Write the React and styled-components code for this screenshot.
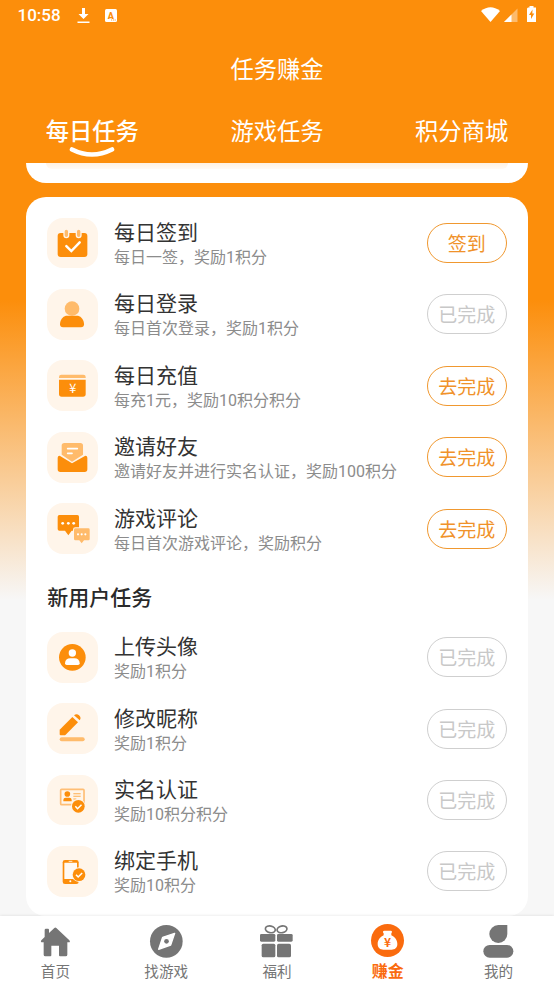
import styled, { createGlobalStyle } from "styled-components";

const GlobalStyle = createGlobalStyle`
  * {
    box-sizing: border-box;
  }
  body {
    margin: 0;
    font-family: Roboto, "Noto Sans CJK SC", sans-serif;
  }
`;

const ORANGE = "#fc8e0b";
const LIGHT = "#ffbb6b";
const CREAM = "#fff5ea";
const GRAY = "#757575";

const Page = styled.div`
  width: 554px;
  height: 984px;
  display: flex;
  flex-direction: column;
  overflow: hidden;
  background: linear-gradient(180deg, ${ORANGE} 0, ${ORANGE} 300px, #f7f7f7 600px);
`;

const StatusBar = styled.div`
  display: flex;
  align-items: center;
  height: 31px;
  padding: 0 17px 0 17.5px;
  color: #fff;
`;

const Clock = styled.span`
  font-size: 17px;
  font-weight: 500;
  line-height: 31px;
  width: 59.5px;
`;

const StatusIcons = styled.div`
  display: flex;
  align-items: center;
  gap: ${(p) => p.$gap || 0}px;
  margin-left: ${(p) => (p.$right ? "auto" : "0")};
  padding-bottom: ${(p) => (p.$right ? 2 : 1)}px;
  svg {
    display: block;
  }
`;

const TitleBar = styled.h1`
  margin: 0;
  height: 76px;
  line-height: 78px;
  text-align: center;
  font-size: 23.3px;
  font-weight: 400;
  color: #fff;
`;

const Tabs = styled.div`
  display: flex;
  height: 56px;
`;

const Tab = styled.div`
  flex: 1;
  display: flex;
  flex-direction: column;
  align-items: center;
  font-size: 23.3px;
  line-height: 38px;
  padding-top: 6px;
  color: #fff;
  font-weight: ${(p) => (p.$active ? 500 : 400)};
  svg {
    margin-top: -6px;
  }
`;

const Content = styled.div`
  flex: 1;
  min-height: 0;
  overflow: hidden;
  padding: 0 26.5px 0 26.3px;
`;

const PrevCard = styled.div`
  height: 20px;
  padding: 0 20px;
  border-radius: 0 0 20px 20px;
  background: #fff;
  margin-bottom: 14px;
`;

const PrevCardInner = styled.div`
  height: 6px;
  border-radius: 0 0 20px 20px;
  background: linear-gradient(180deg, #fff1e2, #fffaf5);
`;

const Card = styled.div`
  height: 719px;
  padding: 10.3px 20.7px 0 21px;
  border-radius: 20px;
  background: #fff;
`;

const Row = styled.div`
  display: flex;
  align-items: center;
  height: 71.4px;
`;

const Tile = styled.div`
  width: 50.7px;
  height: 50.7px;
  border-radius: 16px;
  background: ${CREAM};
  svg {
    display: block;
    width: 100%;
    height: 100%;
  }
`;

const Texts = styled.div`
  flex: 1;
  padding: 3px 0 0 16px;
  white-space: nowrap;
`;

const RowTitle = styled.div`
  font-size: 21px;
  line-height: 26px;
  color: #333;
`;

const RowSub = styled.div`
  font-size: 16px;
  line-height: 23px;
  color: #8c8c8c;
`;

const Action = styled.button`
  width: 80px;
  height: 40px;
  padding: 3px 0 0;
  border-radius: 20px;
  border: 1.4px solid ${(p) => (p.$done ? "#cfcfcf" : "#f0982f")};
  background: #fff;
  font-family: inherit;
  font-size: 19px;
  line-height: 35px;
  color: ${(p) => (p.$done ? "#c8c8c8" : "#f0922a")};
`;

const SectionTitle = styled.h2`
  margin: 0;
  height: 57.3px;
  padding-top: 9.5px;
  line-height: 49px;
  font-size: 21px;
  font-weight: 500;
  color: #2a2a2a;
`;

const Nav = styled.nav`
  display: flex;
  height: 68px;
  background: #fff;
  box-shadow: 0 0 3px rgba(0, 0, 0, 0.12);
`;

const NavItem = styled.div`
  flex: 1;
  display: flex;
  flex-direction: column;
  align-items: center;
  padding-top: ${(p) => (p.$active ? 7.5 : 8.7)}px;
  font-size: ${(p) => (p.$active ? 16 : 14.6)}px;
  font-weight: ${(p) => (p.$active ? 700 : 400)};
  line-height: ${(p) => (p.$active ? 29 : 28)}px;
  color: ${(p) => (p.$active ? "#fa6b0e" : "#757575")};
  svg {
    display: block;
    width: 33px;
    height: 33px;
    overflow: visible;
  }
`;

const TileSvg = ({ children }) => <svg viewBox="0 0 152 152">{children}</svg>;

const Badge = ({ x, y }) => (
  <>
    <circle cx={x} cy={y} r="22" fill={CREAM} />
    <circle cx={x} cy={y} r="19" fill={ORANGE} />
    <path d={`M${x - 9} ${y}l6.5 7 12-12`} fill="none" stroke="#fff" strokeWidth="4.5" />
  </>
);

const CalendarIcon = () => (
  <TileSvg>
    <rect x="32" y="45" width="89" height="72" rx="9" fill={ORANGE} />
    <rect x="51" y="33" width="14" height="26" rx="7" fill={LIGHT} stroke={CREAM} strokeWidth="4" />
    <rect x="88" y="33" width="14" height="26" rx="7" fill={LIGHT} stroke={CREAM} strokeWidth="4" />
    <path d="M58 84l15 15 25-26" fill="none" stroke="#fff" strokeWidth="7.5" strokeLinecap="round" />
  </TileSvg>
);

const UserIcon = () => (
  <TileSvg>
    <path d="M57 80h36c10 2 18 13 18 26 0 6-3 9-9 9H48c-6 0-9-3-9-9 0-13 8-24 18-26z" fill={ORANGE} />
    <circle cx="75" cy="59" r="22" fill={LIGHT} />
  </TileSvg>
);

const WalletIcon = () => (
  <TileSvg>
    <path d="M36 54v-3q0-7 7-7h66q7 0 7 7v3z" fill={LIGHT} />
    <path d="M36 59h80v43q0 8-8 8H44q-8 0-8-8z" fill={ORANGE} />
    <text x="77.5" y="98" textAnchor="middle" fontSize="38" fontFamily="Noto Sans CJK SC" fill="#fff">¥</text>
  </TileSvg>
);

const LetterIcon = () => (
  <TileSvg>
    <path d="M44 41q0-8 8-8h48q8 0 8 8v27L75 89 44 68z" fill={LIGHT} />
    <path d="M62 50h29M62 64h13" stroke="#fff" strokeWidth="5" strokeLinecap="round" />
    <path d="M32 77q0-6 6-6l37 23 40-23q6 0 6 6v35q0 8-8 8H40q-8 0-8-8z" fill={ORANGE} />
  </TileSvg>
);

const ChatIcon = () => (
  <TileSvg>
    <path d="M37 36h54q5 0 5 5v37q0 5-5 5H74L64 97 54 83H37q-5 0-5-5V41q0-5 5-5z" fill={ORANGE} />
    <path d="M85 76h39q4 0 4 4v28q0 4-4 4h-13l-7 9-7-9H85q-4 0-4-4V80q0-4 4-4z" fill={LIGHT} stroke={CREAM} strokeWidth="6" paintOrder="stroke" />
    <g fill="#fff">
      <circle cx="47" cy="61" r="4.2" />
      <circle cx="64" cy="61" r="4.2" />
      <circle cx="80" cy="61" r="4.2" />
      <circle cx="93" cy="94" r="3.2" />
      <circle cx="104" cy="94" r="3.2" />
      <circle cx="115" cy="94" r="3.2" />
    </g>
  </TileSvg>
);

const AvatarIcon = () => (
  <TileSvg>
    <circle cx="76" cy="76" r="40" fill={ORANGE} />
    <circle cx="76" cy="63" r="11" fill="#fff" />
    <path d="M54 94q1-15 16-15h12q15 0 16 15q0 5-5 5H59q-5 0-5-5z" fill="#fff" />
  </TileSvg>
);

const PencilIcon = () => (
  <TileSvg>
    <path d="M41 97q-3 0-3-3V80L76 42l17 16-37 37q-2 2-5 2z" fill={ORANGE} />
    <path d="M81 37q8-7 15 0 8 7 2 15z" fill={ORANGE} />
    <rect x="38" y="103" width="75" height="12" rx="6" fill={LIGHT} />
  </TileSvg>
);

const IdCardIcon = () => (
  <TileSvg>
    <rect x="41" y="43" width="70" height="46" rx="3" fill="none" stroke="#ffbe75" strokeWidth="5" />
    <circle cx="61" cy="57" r="8.5" fill={ORANGE} />
    <path d="M49 79v-4q0-7 7-7h11q7 0 7 7v4z" fill={ORANGE} />
    <path d="M79 56h22M79 64h22M79 72h9" stroke="#ffae50" strokeWidth="3" />
    <Badge x={94} y={94} />
  </TileSvg>
);

const PhoneIcon = () => (
  <TileSvg>
    <rect x="47" y="42" width="48" height="72" rx="7" fill={ORANGE} />
    <rect x="52" y="50" width="38" height="49" rx="1" fill="#fffaf4" />
    <circle cx="70" cy="106" r="3" fill="#fff" />
    <path d="M65 46h11" stroke="#fff" strokeWidth="2.5" />
    <Badge x={96} y={86} />
  </TileSvg>
);

const HomeIcon = () => (
  <svg viewBox="0 0 99 99" fill={GRAY}>
    <path d="M46 9q3-3 6 0L91 46q3 3 1 6h-7v37q0 5-5 5H63q-3 0-3-3V62H37v29q0 3-3 3H19q-5 0-5-5V52H7q-3-3 0-6l10-10V15q0-4 4-4h6q3 0 3 4v9z" />
  </svg>
);

const CompassIcon = () => (
  <svg viewBox="0 0 99 99">
    <circle cx="49" cy="49" r="49" fill={GRAY} />
    <path d="M74 25L62 60 26 73 38 37z" fill="#fff" stroke="#fff" strokeWidth="4" strokeLinejoin="round" />
    <circle cx="49.5" cy="49" r="7" fill={GRAY} />
  </svg>
);

const GiftIcon = () => (
  <svg viewBox="0 0 99 99" fill={GRAY}>
    <g fill="none" stroke={GRAY} strokeWidth="5">
      <ellipse cx="31" cy="13" rx="15" ry="10" transform="rotate(12 31 13)" />
      <ellipse cx="66" cy="13" rx="15" ry="10" transform="rotate(-12 66 13)" />
    </g>
    <rect x="0" y="27" width="46" height="23" rx="4" />
    <rect x="51" y="27" width="47" height="23" rx="4" />
    <rect x="5" y="56" width="41" height="41" rx="5" />
    <rect x="51" y="56" width="42" height="41" rx="5" />
  </svg>
);

const MoneyIcon = () => (
  <svg viewBox="0 0 99 99">
    <circle cx="49.5" cy="49.5" r="49.5" fill="#fa6b0e" />
    <path d="M40 20h19q4 0 4 4-1 3-2 4v6c11 5 18 15 18 26 0 12-8 17-17 17H37c-9 0-17-5-17-17 0-11 7-21 18-26v-6q-2-1-2-4 0-4 4-4z" fill="#fff" />
    <text x="49.5" y="69" textAnchor="middle" fontSize="36" fontWeight="700" fontFamily="Noto Sans CJK SC" fill="#fa6b0e">¥</text>
  </svg>
);

const MeIcon = () => (
  <svg viewBox="0 0 99 99" fill={GRAY}>
    <path d="M49 0h27v27a27 27 0 1 1-27-27z" />
    <rect x="4" y="60" width="90" height="38" rx="19" />
  </svg>
);

const dailyTasks = [
  { icon: CalendarIcon, title: "每日签到", sub: "每日一签，奖励1积分", action: "签到" },
  { icon: UserIcon, title: "每日登录", sub: "每日首次登录，奖励1积分", action: "已完成", done: true },
  { icon: WalletIcon, title: "每日充值", sub: "每充1元，奖励10积分积分", action: "去完成" },
  { icon: LetterIcon, title: "邀请好友", sub: "邀请好友并进行实名认证，奖励100积分", action: "去完成" },
  { icon: ChatIcon, title: "游戏评论", sub: "每日首次游戏评论，奖励积分", action: "去完成" },
];

const newUserTasks = [
  { icon: AvatarIcon, title: "上传头像", sub: "奖励1积分", action: "已完成", done: true },
  { icon: PencilIcon, title: "修改昵称", sub: "奖励1积分", action: "已完成", done: true },
  { icon: IdCardIcon, title: "实名认证", sub: "奖励10积分积分", action: "已完成", done: true },
  { icon: PhoneIcon, title: "绑定手机", sub: "奖励10积分", action: "已完成", done: true },
];

const navItems = [
  { icon: HomeIcon, label: "首页" },
  { icon: CompassIcon, label: "找游戏" },
  { icon: GiftIcon, label: "福利" },
  { icon: MoneyIcon, label: "赚金", active: true },
  { icon: MeIcon, label: "我的" },
];

const TaskRow = ({ task }) => {
  const Icon = task.icon;
  return (
    <Row>
      <Tile>
        <Icon />
      </Tile>
      <Texts>
        <RowTitle>{task.title}</RowTitle>
        <RowSub>{task.sub}</RowSub>
      </Texts>
      <Action $done={task.done}>{task.action}</Action>
    </Row>
  );
};

export default function App() {
  return (
    <Page>
      <GlobalStyle />
      <StatusBar>
        <Clock>10:58</Clock>
        <StatusIcons $gap={15}>
          <svg width="13" height="17" viewBox="0 0 13 17" fill="#fff">
            <path d="M5 1h3v6h3.5L6.500 12 1.500 7H5zM.5 14.500h12v1.500H.5z" />
          </svg>
          <svg width="12" height="13" viewBox="0 0 12 13">
            <rect width="12" height="13" rx="1.500" fill="#fff" />
            <text x="5.800" y="9.500" textAnchor="middle" fontSize="9" fontWeight="900" fontFamily="Roboto" fill={ORANGE}>A</text>
            <path d="M6 11h1.200M8 11h1.200M9.800 11h1" stroke={ORANGE} strokeWidth=".8" />
          </svg>
        </StatusIcons>
        <StatusIcons $right>
          <svg width="56" height="18" viewBox="0 0 56 18" fill="#fff">
            <path d="M0 5Q9.500-2.500 19 5L9.500 16z" />
            <path d="M36.500 2.500V16H23z" opacity=".4" />
            <path d="M30.500 8.500V16H23z" />
            <path d="M47 1.500h1.500V0h4v1.500h2.500V16h-9V2.500z" />
            <path d="M51.500 3.500l-3.500 5.500h2v4l3.300-5.500h-2z" fill={ORANGE} />
          </svg>
        </StatusIcons>
      </StatusBar>
      <TitleBar>任务赚金</TitleBar>
      <Tabs>
        <Tab $active>
          每日任务
          <svg width="46" height="13" viewBox="0 0 46 13">
            <path d="M3 4.500Q23 14.500 43 4.500" fill="none" stroke="#fff" strokeWidth="4.600" strokeLinecap="round" />
          </svg>
        </Tab>
        <Tab>游戏任务</Tab>
        <Tab>积分商城</Tab>
      </Tabs>
      <Content>
        <PrevCard>
          <PrevCardInner />
        </PrevCard>
        <Card>
          {dailyTasks.map((task) => (
            <TaskRow key={task.title} task={task} />
          ))}
          <SectionTitle>新用户任务</SectionTitle>
          {newUserTasks.map((task) => (
            <TaskRow key={task.title} task={task} />
          ))}
        </Card>
      </Content>
      <Nav>
        {navItems.map(({ icon: Icon, label, active }) => (
          <NavItem key={label} $active={active}>
            <Icon />
            {label}
          </NavItem>
        ))}
      </Nav>
    </Page>
  );
}
